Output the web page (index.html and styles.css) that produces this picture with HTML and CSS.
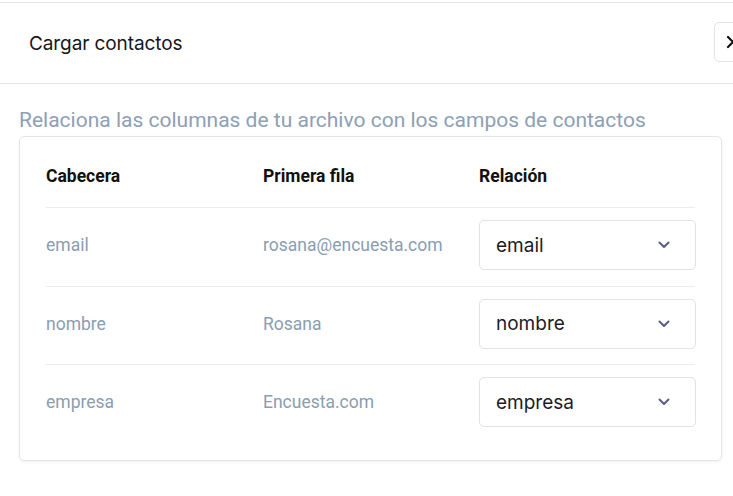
FILE: index.html
```html
<!DOCTYPE html>
<html lang="es">
<head>
<meta charset="utf-8">
<link rel="stylesheet" href="styles.css">
</head>
<body>
<div class="modal">
  <div class="modal-header">
    <h2 class="title">Cargar contactos</h2>
    <button class="close" aria-label="Cerrar">
      <svg width="14" height="14" viewBox="0 0 14 14"><path d="M2 2L12 12M12 2L2 12" stroke="#111" stroke-width="2.2" stroke-linecap="round"/></svg>
    </button>
  </div>
  <div class="modal-body">
    <p class="subtitle">Relaciona las columnas de tu archivo con los campos de contactos</p>
    <div class="card">
      <div class="row head">
        <div class="cell">Cabecera</div>
        <div class="cell">Primera fila</div>
        <div class="cell">Relación</div>
      </div>
      <div class="row">
        <div class="cell muted">email</div>
        <div class="cell muted">rosana@encuesta.com</div>
        <div class="cell"><div class="select"><span>email</span><svg class="chev" width="12" height="8" viewBox="0 0 12 8"><path d="M1.5 1.5L6 6L10.5 1.5" fill="none" stroke="#5b5d86" stroke-width="2" stroke-linecap="round" stroke-linejoin="round"/></svg></div></div>
      </div>
      <div class="row">
        <div class="cell muted">nombre</div>
        <div class="cell muted">Rosana</div>
        <div class="cell"><div class="select"><span>nombre</span><svg class="chev" width="12" height="8" viewBox="0 0 12 8"><path d="M1.5 1.5L6 6L10.5 1.5" fill="none" stroke="#5b5d86" stroke-width="2" stroke-linecap="round" stroke-linejoin="round"/></svg></div></div>
      </div>
      <div class="row last">
        <div class="cell muted">empresa</div>
        <div class="cell muted">Encuesta.com</div>
        <div class="cell"><div class="select"><span>empresa</span><svg class="chev" width="12" height="8" viewBox="0 0 12 8"><path d="M1.5 1.5L6 6L10.5 1.5" fill="none" stroke="#5b5d86" stroke-width="2" stroke-linecap="round" stroke-linejoin="round"/></svg></div></div>
      </div>
    </div>
  </div>
</div>
</body>
</html>
```
FILE: styles.css
```css
* { box-sizing: border-box; }
html, body { margin: 0; padding: 0; background: #fff; overflow: hidden; }
body { font-family: Inter, "Noto Sans", sans-serif; color: #16161d; width: 733px; height: 496px; }
.modal { width: 733px; border-top: 1px solid #e3e3e3; margin-top: 2px; }
.modal-header {
  height: 81px;
  display: flex;
  align-items: center;
  justify-content: space-between;
  padding-left: 29px;
  border-bottom: 1px solid #e3e3e3;
}
.title { margin: 0; font-size: 19px; font-weight: 400; color: #16161d; letter-spacing: -0.1px; }
.close {
  width: 40px; height: 40px;
  margin-right: -21px;
  margin-top: -2px;
  border: 1px solid #e3e3e3;
  border-radius: 5px;
  background: #fff;
  display: flex; align-items: center; padding: 0 0 0 11px;
}
.modal-body { padding: 24px 11px 0 19px; }
.subtitle {
  margin: 0 0 4px 0;
  font-family: Roboto, sans-serif;
  font-size: 21px;
  color: #8da0b4;
  line-height: 24px;
}
.card {
  border: 1px solid #e4e4e7;
  border-radius: 5px;
  box-shadow: 0 1px 3px rgba(0,0,0,0.06);
  padding: 8px 26px 0 26px;
  height: 325px;
}
.row {
  display: grid;
  grid-template-columns: 217px 216px 217px;
  align-items: start;
  height: 78.5px;
  padding-top: 12px;
  border-bottom: 1px solid #ececef;
}
.row .cell.muted { line-height: 50px; }
.row.head { height: 63px; padding-top: 0; align-items: center; }
.row.last { border-bottom: none; }
.head .cell { font-family: Roboto, sans-serif; font-weight: 700; font-size: 17.5px; color: #111; }
.cell { font-family: Roboto, sans-serif; font-size: 17.5px; }
.muted { color: #8a9db1; }
.select {
  height: 50px;
  border: 1px solid #e2e2e6;
  border-radius: 5px;
  display: flex; align-items: center; justify-content: space-between;
  padding: 0 25px 0 16px;
  font-family: Inter, sans-serif;
  font-size: 19px;
  color: #1c1c24;
}
.chev { display: block; }
```
